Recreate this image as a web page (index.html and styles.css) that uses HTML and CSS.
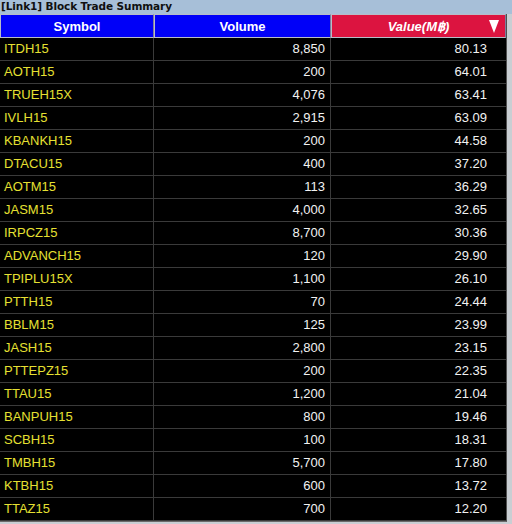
FILE: index.html
```html
<!DOCTYPE html>
<html>
<head>
<meta charset="utf-8">
<link rel="stylesheet" href="styles.css">
</head>
<body>
<div class="window">
  <div class="title">[Link1] Block Trade Summary</div>
  <div class="frame">
    <div class="grid">
      <div class="hd hd-blue">Symbol</div>
      <div class="hd hd-blue">Volume</div>
      <div class="hd hd-red"><span class="hd-val">Value(M฿)</span><span class="tri"></span></div>
    </div>
    <div class="grid body" id="rows"></div>
  </div>
</div>
<script src="app.js"></script>
</body>
</html>
```
FILE: app.js
```js
var data = [
["ITDH15","8,850","80.13"],
["AOTH15","200","64.01"],
["TRUEH15X","4,076","63.41"],
["IVLH15","2,915","63.09"],
["KBANKH15","200","44.58"],
["DTACU15","400","37.20"],
["AOTM15","113","36.29"],
["JASM15","4,000","32.65"],
["IRPCZ15","8,700","30.36"],
["ADVANCH15","120","29.90"],
["TPIPLU15X","1,100","26.10"],
["PTTH15","70","24.44"],
["BBLM15","125","23.99"],
["JASH15","2,800","23.15"],
["PTTEPZ15","200","22.35"],
["TTAU15","1,200","21.04"],
["BANPUH15","800","19.46"],
["SCBH15","100","18.31"],
["TMBH15","5,700","17.80"],
["KTBH15","600","13.72"],
["TTAZ15","700","12.20"]
];
var rows = document.getElementById("rows");
var html = "";
data.forEach(function (r) {
  html += '<div class="c sym">' + r[0] + '</div><div class="c num">' + r[1] + '</div><div class="c num val">' + r[2] + '</div>';
});
rows.innerHTML = html;
```
FILE: styles.css
```css
html, body {
  margin: 0;
  padding: 0;
  background: #c9ced3;
}
.window {
  width: 512px;
  height: 524px;
  overflow: hidden;
  background: #c9ced3;
}
.title {
  height: 14px;
  line-height: 13px;
  background: #a7bfd8;
  font-family: "DejaVu Sans", sans-serif;
  font-weight: bold;
  font-size: 10.5px;
  color: #101010;
  padding-left: 1px;
  letter-spacing: -0.1px;
  white-space: nowrap;
}
.frame {
  width: 507px;
  background: #000;
  border-right: 1px solid #505050;
  border-bottom: 1px solid #6a6a6a;
  box-sizing: border-box;
}
.grid {
  display: grid;
  grid-template-columns: 154px 177px 175px;
}
.hd {
  height: 24px;
  box-sizing: border-box;
  border: 1px solid #b8bcc8;
  border-right-color: #7c7c9c;
  color: #fff;
  font-family: "Liberation Sans", Arial, sans-serif;
  font-weight: bold;
  font-size: 13px;
  display: flex;
  align-items: center;
  justify-content: center;
}
.hd-blue {
  background: #0000f8;
}
.hd-red {
  background: #dc1440;
  position: relative;
}
.hd-val {
  font-style: italic;
}
.tri {
  position: absolute;
  right: 6px;
  top: 5px;
  width: 0;
  height: 0;
  border-left: 5px solid transparent;
  border-right: 5px solid transparent;
  border-top: 13px solid #fff;
}
.c {
  height: 23px;
  box-sizing: border-box;
  border-right: 1px solid #3a3a3a;
  border-bottom: 1px solid #3a3a3a;
  font-family: "Liberation Sans", Arial, sans-serif;
  font-size: 13px;
  line-height: 22px;
  color: #f2f2f2;
  white-space: nowrap;
}
.sym {
  color: #e6e032;
  padding-left: 4px;
}
.num {
  text-align: right;
  padding-right: 5px;
}
.val {
  padding-right: 19px;
  border-right: none;
}
```
